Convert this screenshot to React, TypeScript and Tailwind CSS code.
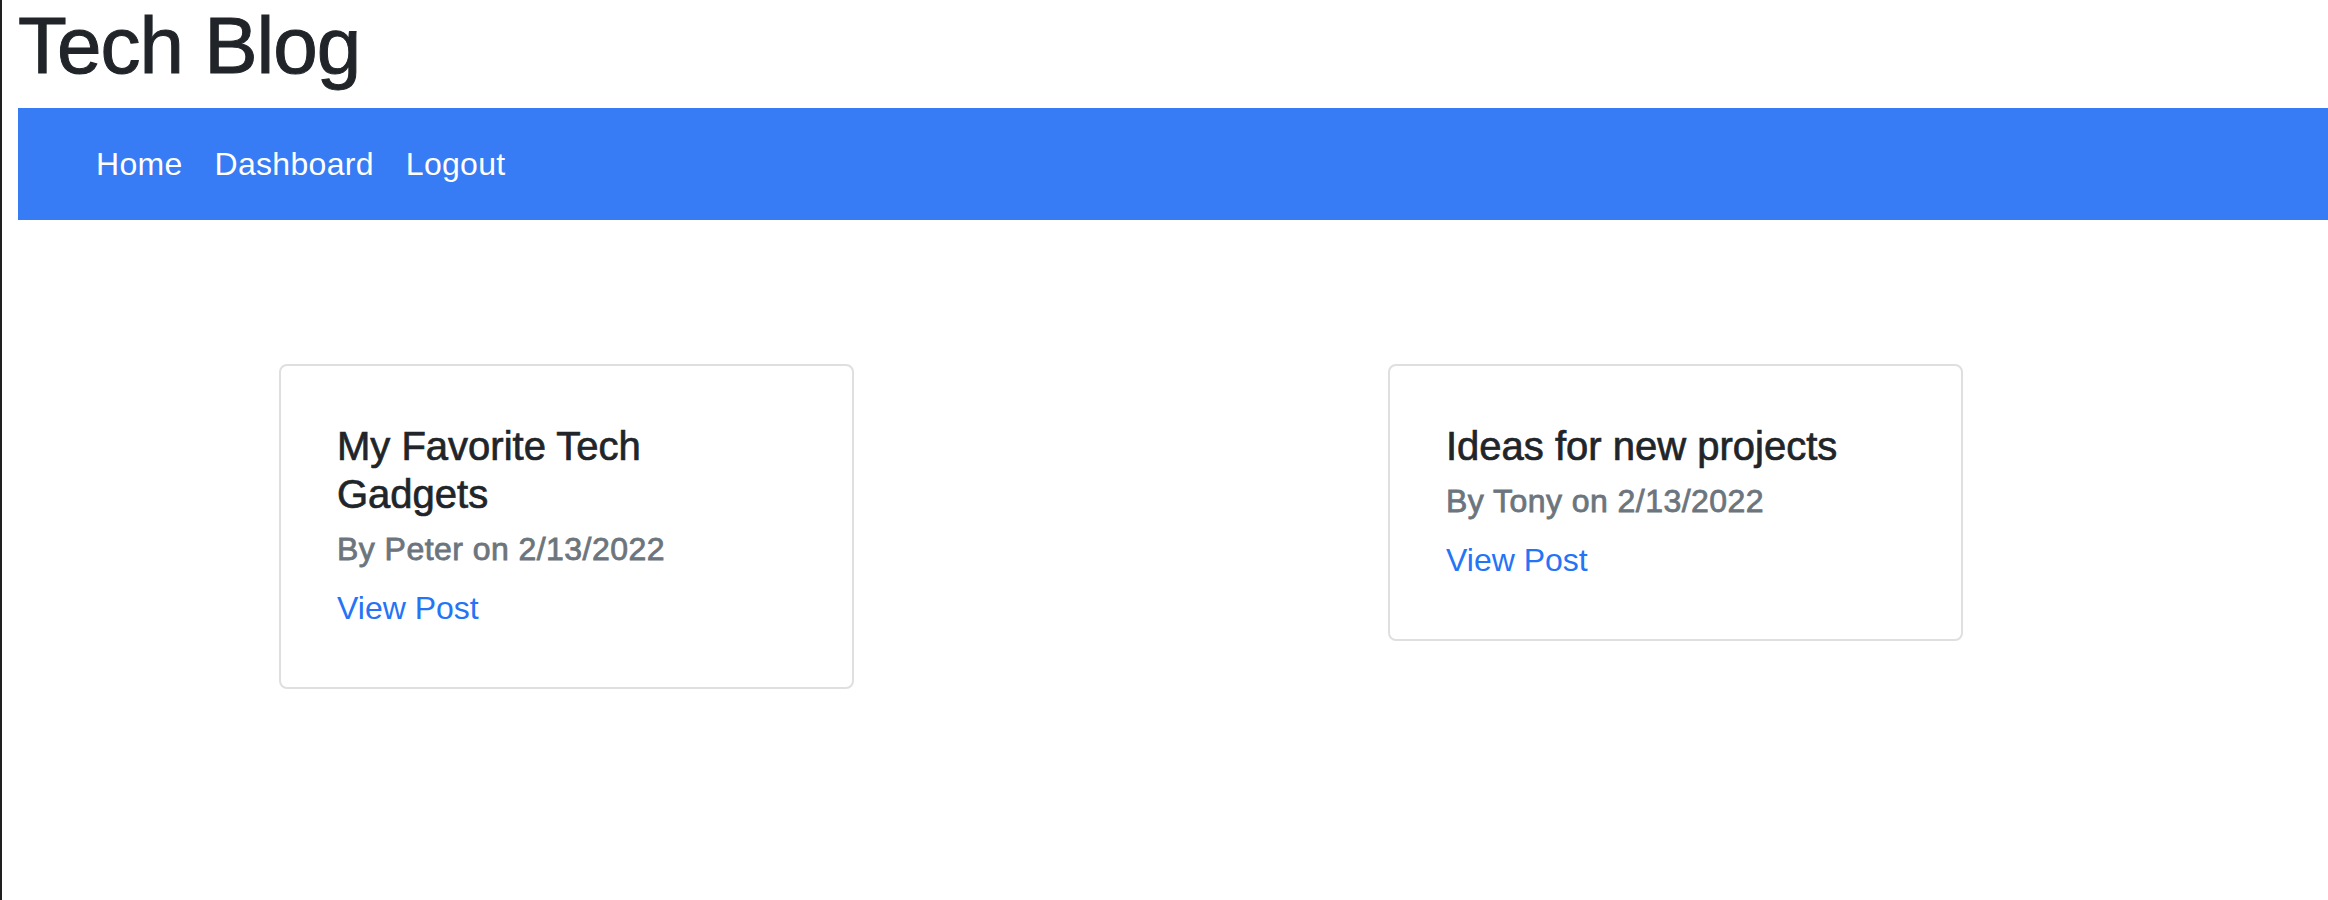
const posts = [
  { title: 'My Favorite Tech Gadgets', author: 'Peter', date: '2/13/2022' },
  { title: 'Ideas for new projects', author: 'Tony', date: '2/13/2022' },
];

const links = ['Home', 'Dashboard', 'Logout'];

function PostCard({ title, author, date }: { title: string; author: string; date: string }) {
  return (
    <div className="w-[575px] self-start rounded-[8px] border-2 border-[#dfdfdf] bg-white pl-[56px] pr-[50px] pt-[56px] pb-[55px]">
      <h5 className="text-[40px] leading-[48px] text-[#212529] [-webkit-text-stroke:0.7px_#212529]">{title}</h5>
      <h6 className="mt-[12px] text-[32px] leading-[38px] tracking-[0.45px] text-[#6c757d] [-webkit-text-stroke:0.8px_#6c757d]">
        By {author} on {date}
      </h6>
      <a href="#" className="mt-[16px] block text-[32px] leading-[48px] text-[#2574f6]">
        View Post
      </a>
    </div>
  );
}

export default function App() {
  return (
    <div className="flex min-h-screen bg-white font-['Liberation_Sans',Arial,sans-serif]">
      {/* window edge */}
      <div className="w-[2px] shrink-0 bg-[#1f1f1f]" />

      <div className="flex-1 pl-[16px]">
        <h1 className="pt-[1px] text-[80px] leading-[90px] tracking-[-1px] text-[#212529] [-webkit-text-stroke:1px_#212529]">
          Tech Blog
        </h1>

        <nav className="mt-[17px] flex bg-[#377bf5] py-8 pl-[62px]">
          {links.map((l) => (
            <a key={l} href="#" className="px-4 text-[32px] leading-[48px] tracking-[0.3px] text-white">
              {l}
            </a>
          ))}
        </nav>

        {/* posts */}
        <div className="flex gap-[534px] pt-[144px] pl-[261px]">
          {posts.map((p) => (
            <PostCard key={p.title} {...p} />
          ))}
        </div>
      </div>
    </div>
  );
}
